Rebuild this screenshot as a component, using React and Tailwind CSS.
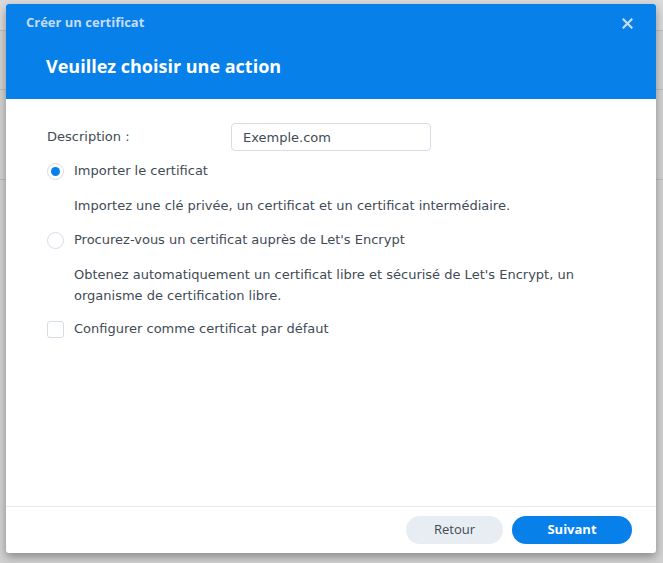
import React, { useState } from 'react';

const App = () => {
  const [choice, setChoice] = useState('import');
  const [isDefault, setIsDefault] = useState(false);
  const [description, setDescription] = useState('Exemple.com');

  return (
    <div className="relative w-[663px] h-[563px] overflow-hidden bg-[#d2d2d2]" style={{ fontFamily: '"DejaVu Sans", sans-serif' }}>
      {/* Dimmed page behind the dialog */}
      <div className="flex flex-col">
        <div className="h-[31px] border-b border-[#bdbdbd] bg-[#dadada]"></div>
        <div className="h-[59px] border-b border-[#bdbdbd]"></div>
        <div className="h-[90px] border-b border-[#bdbdbd]"></div>
      </div>

      {/* Dialog */}
      <div className="absolute left-[6px] top-[4px] w-[650px] h-[549px] bg-white rounded-[3px] shadow-[0_4px_10px_rgba(0,0,0,0.35)] flex flex-col overflow-hidden">
        {/* Header */}
        <div className="h-[95px] bg-[#0780ea] flex flex-col px-[20px]">
          <div className="flex items-center justify-between h-[38px]">
            <span className="text-[13px] font-bold text-[#c4dcf7]" style={{ fontFamily: '"Open Sans", sans-serif' }}>Créer un certificat</span>
            <button className="w-[16px] h-[16px] flex items-center justify-center mr-[1px] text-[#c4dcf7]">
              <svg width="11" height="11" viewBox="0 0 11 11" fill="none" stroke="currentColor" strokeWidth="2.2" strokeLinecap="square">
                <path d="M1.5 1.5l8 8M9.5 1.5l-8 8" />
              </svg>
            </button>
          </div>
          <h2 className="pl-[20px] mt-[11px] text-[18px] leading-[26px] font-bold text-white" style={{ fontFamily: '"Open Sans", sans-serif' }}>Veuillez choisir une action</h2>
        </div>

        {/* Body */}
        <div className="flex-1 flex flex-col pl-[41px] pr-[40px] pt-[24px] text-[13px] text-[#414b55]">
          <div className="flex items-center">
            <span className="w-[184px]">Description :</span>
            <input
              value={description}
              onChange={(e) => setDescription(e.target.value)}
              className="w-[200px] h-[28px] px-[11px] border border-[#d5dde6] rounded-[4px] text-[13px] text-[#414b55] outline-none"
              style={{ fontFamily: '"DejaVu Sans", sans-serif' }}
            />
          </div>

          <label className="flex items-center mt-[6px] h-[28px] cursor-pointer" onClick={() => setChoice('import')}>
            <span className="w-[17px] h-[17px] rounded-full border border-[#d5dde6] bg-white flex items-center justify-center">
              {choice === 'import' && <span className="w-[9px] h-[9px] rounded-full bg-[#0780ea]"></span>}
            </span>
            <span className="ml-[10px]">Importer le certificat</span>
          </label>
          <p className="ml-[27px] mt-[10px] leading-[21px]">Importez une clé privée, un certificat et un certificat intermédiaire.</p>

          <label className="flex items-center mt-[10px] h-[28px] cursor-pointer" onClick={() => setChoice('letsencrypt')}>
            <span className="w-[17px] h-[17px] rounded-full border border-[#d5dde6] bg-white flex items-center justify-center">
              {choice === 'letsencrypt' && <span className="w-[9px] h-[9px] rounded-full bg-[#0780ea]"></span>}
            </span>
            <span className="ml-[10px]">Procurez-vous un certificat auprès de Let's Encrypt</span>
          </label>
          <p className="ml-[27px] mt-[10px] leading-[21px] w-[500px]">
            Obtenez automatiquement un certificat libre et sécurisé de Let's Encrypt, un organisme de certification libre.
          </p>

          <label className="flex items-center mt-[9px] h-[28px] cursor-pointer" onClick={() => setIsDefault(!isDefault)}>
            <span className="w-[17px] h-[17px] rounded-[3px] border border-[#d5dde6] bg-white flex items-center justify-center">
              {isDefault && (
                <svg width="12" height="12" viewBox="0 0 12 12" fill="none" stroke="#0780ea" strokeWidth="2">
                  <path d="M2 6l3 3 5-6" />
                </svg>
              )}
            </span>
            <span className="ml-[10px]">Configurer comme certificat par défaut</span>
          </label>
        </div>

        {/* Footer */}
        <div className="h-[47px] border-t border-[#e3e9ef] flex items-center justify-end gap-[9px] pr-[24px]">
          <button className="w-[97px] h-[28px] rounded-full bg-[#e8edf3] text-[13px] text-[#414b55]" style={{ fontFamily: '"Open Sans", sans-serif' }}>Retour</button>
          <button className="w-[120px] h-[28px] rounded-full bg-[#0780ea] text-[13px] font-bold text-white" style={{ fontFamily: '"Open Sans", sans-serif' }}>Suivant</button>
        </div>
      </div>
    </div>
  );
};

export default App;
